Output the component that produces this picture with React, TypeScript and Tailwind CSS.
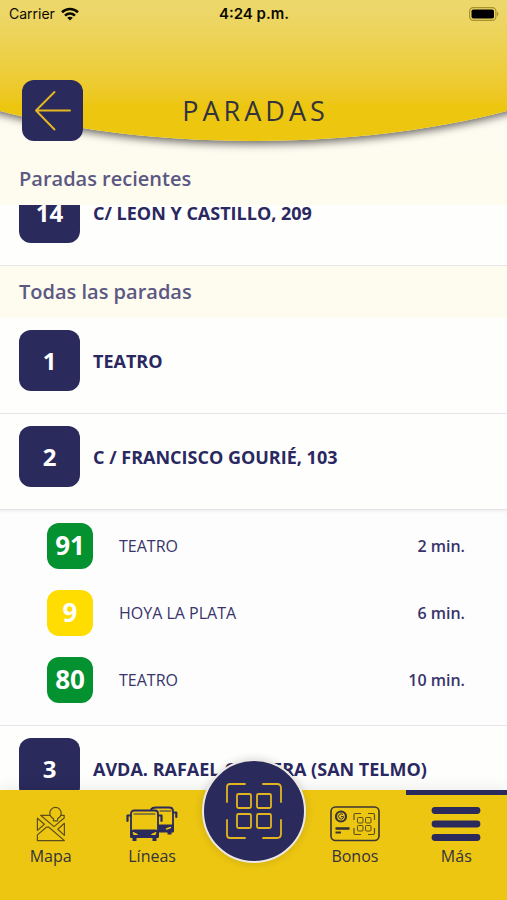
import { useState } from "react"
import type { ReactNode } from "react"

type Arrival = {
    line: string
    destination: string
    minutes: number
    color: string
}

type Stop = {
    id: number
    name: string
    arrivals?: Arrival[]
}

const recentStops: Stop[] = [
    { id: 14, name: "C/ LEON Y CASTILLO, 209" },
]

const allStops: Stop[] = [
    { id: 1, name: "TEATRO" },
    {
        id: 2,
        name: "C / FRANCISCO GOURIÉ, 103",
        arrivals: [
            { line: "91", destination: "TEATRO", minutes: 2, color: "bg-[#04912f]" },
            { line: "9", destination: "HOYA LA PLATA", minutes: 6, color: "bg-[#ffdd00]" },
            { line: "80", destination: "TEATRO", minutes: 10, color: "bg-[#04912f]" },
        ],
    },
    { id: 3, name: "AVDA. RAFAEL CABRERA (SAN TELMO)" },
]

const WifiIcon = () => (
    <svg viewBox="0 0 18 14" className="h-3.5 w-[18px]" fill="none" stroke="#0c0a00" strokeWidth="2.6" aria-hidden="true">
        <path d="M1 5.2C5.6.9 12.4.9 17 5.2" />
        <path d="M4 8.6C6.9 5.9 11.1 5.9 14 8.6" />
        <path d="M9 13.5 6.2 10.7C7.8 9.3 10.2 9.3 11.8 10.7Z" fill="#0c0a00" stroke="none" />
    </svg>
)

const BatteryIcon = () => (
    <svg viewBox="0 0 30 14" className="h-3.5 w-[30px]" aria-hidden="true">
        <rect x=".6" y=".6" width="26.3" height="12.8" rx="3.6" fill="none" stroke="#a8922c" strokeWidth="1.2" />
        <rect x="2.5" y="2.5" width="22.5" height="9" rx="1.8" fill="#000" />
        <path d="M28 4.8c1.7.6 1.7 3.8 0 4.4Z" fill="#a8922c" />
    </svg>
)

const BackIcon = () => (
    <svg viewBox="0 0 61 61" className="size-full" fill="none" stroke="#e6b820" strokeWidth="1.9" strokeLinecap="round" strokeLinejoin="round" aria-hidden="true">
        <path d="M32.5 12 14 30.5 32.5 49.5M14 30.5H48" />
    </svg>
)

const MapIcon = () => (
    <svg viewBox="0 0 30 36" className="h-9 w-[30px]" fill="none" stroke="#5d4f1c" strokeWidth="1.2" strokeLinejoin="round" aria-hidden="true">
        <path d="M17.4 14.8V12.6C15.200 11.600 13.800 9.600 13.800 7.100a5.700 5.700 0 0 1 11.400 0C25.200 9.600 23.800 11.600 21.600 12.600V14.800Z" />
        <path d="M14 9.3H4.6L18 20.6 28.2 12V9.3H25" />
        <path d="M1.4 12.2V24.4L8.4 18.3Z" />
        <path d="M28.4 17.3V29.4L21.8 23.3Z" />
        <path d="M1.4 28.9V34.6H28.4L12.9 21.2H10.4Z" />
    </svg>
)

const BusIcon = () => (
    <svg viewBox="0 0 52 36" className="h-9 w-[52px]" fill="none" stroke="#2a2a5c" strokeWidth="1.8" strokeLinejoin="round" strokeLinecap="round" aria-hidden="true">
        <path d="M25 3.5C26 1.7 28 1.5 30 1.5H43C45.8 1.5 47 2.8 47 5V24.5H32" />
        <path d="M47.5 6.5H50.3V11" strokeWidth="2.2" />
        <path d="M34 5H45" strokeWidth="1" />
        <path d="M33 19.5H47V25.5H33Z" fill="#2a2a5c" />
        <path d="M43.5 26V28.5" strokeWidth="4" strokeLinecap="butt" />
        <path d="M40.5 23 44.5 21.5" stroke="#edc612" strokeWidth="1.4" />
        <rect x="5" y="4.5" width="27" height="26.5" rx="3" fill="#edc612" />
        <path d="M8 8H29" strokeWidth="1" />
        <path d="M4.500 9.500H1.500V15M32.500 9.500H35.500V15" strokeWidth="2.200" />
        <path d="M5 25.200 8 24.500H29L32 25.200V31H5Z" fill="#2a2a5c" />
        <path d="M8.500 31V35M28.500 31V35" strokeWidth="4" strokeLinecap="butt" />
        <path d="M7.500 26.500 11.500 28.500H8ZM29.500 26.500 25.500 28.500H29Z" fill="#edc612" stroke="#edc612" strokeWidth="1" />
    </svg>
)

const ScanIcon = () => (
    <svg viewBox="0 0 56 56" className="size-14" fill="none" stroke="#e0b520" strokeWidth="1.8" strokeLinecap="round" aria-hidden="true">
        <path d="M1 19V4Q1 1 4 1H19M37 1H51Q55 1 55 5V19M55 37V51Q55 55 51 55H37M19 55H4Q1 55 1 52V37" />
        <rect x="11" y="11" width="14" height="14" rx="1.5" />
        <rect x="31" y="11" width="14" height="14" rx="1.5" />
        <rect x="11" y="31" width="14" height="14" rx="1.5" />
        <rect x="31" y="31" width="14" height="14" rx="1.5" />
    </svg>
)

const CardIcon = () => (
    <svg viewBox="0 0 50 36" className="h-9 w-[50px]" fill="none" stroke="#3a3535" aria-hidden="true">
        <rect x="1" y="1" width="48" height="33.5" rx="4.5" strokeWidth="1.6" />
        <circle cx="11" cy="10.5" r="5" strokeWidth="2.2" />
        <path d="M13 8.5a2.6 2.6 0 1 0 .3 3.5V10.5H11" strokeWidth="1" />
        <path d="M5.5 22.5H19.5" strokeWidth="2.6" />
        <path d="M5.5 26.5H11" strokeWidth="2" />
        <g stroke="#5d4f1c">
            <path d="M24 14V9Q24 7.5 25.5 7.5H31M38 7.5H43Q44.500 7.500 44.500 9V14M44.500 22V27Q44.500 28.500 43 28.500H38M31 28.500H25.500Q24 28.500 24 27V22" strokeWidth="1.2" />
            <rect x="27.5" y="11.5" width="5.5" height="5.5" rx="1" />
            <rect x="35.5" y="11.5" width="5.5" height="5.5" rx="1" />
            <rect x="27.5" y="19.5" width="5.5" height="5.5" rx="1" />
            <rect x="35.5" y="19.5" width="5.5" height="5.5" rx="1" />
        </g>
    </svg>
)

const MenuIcon = () => (
    <svg viewBox="0 0 50 36" className="h-9 w-[50px]" stroke="#2a2a5c" strokeWidth="6.8" strokeLinecap="round" aria-hidden="true">
        <path d="M4 4.5H46M4 18H46M4 31.5H46" />
    </svg>
)

const StatusBar = () => (
    <div className="grid h-7 grid-cols-3 items-center pl-[9px] pr-2 font-[Inter,sans-serif] text-sm text-[#0c0a00]">
        <div className="flex items-center gap-1.5">
            <span>Carrier</span>
            <WifiIcon />
        </div>
        <span className="text-center text-[15px] font-semibold">4:24 p.m.</span>
        <div className="flex justify-end">
            <BatteryIcon />
        </div>
    </div>
)

const Header = () => (
    <header className="relative h-[153px] shrink-0 overflow-x-clip bg-[#fefbf0]">
        <div className="absolute top-0 -left-[31%] h-[141px] w-[162%] rounded-[0_0_50%_50%/0_0_100%_100%] bg-linear-to-b from-[#ecd76b] from-5% via-[#edcf41] via-45% to-[#edc610] to-75% shadow-[0_2px_9px_1px_rgba(0,0,0,0.6)]" />
        <div className="relative">
            <StatusBar />
            <div className="grid grid-cols-[1fr_auto_1fr] items-center px-[22px] pt-[52px]">
                <button type="button" aria-label="Volver" className="size-[61px] rounded-xl bg-[#2a2a5c]">
                    <BackIcon />
                </button>
                <h1 className="pl-1 text-[27px] leading-8 tracking-[4px] text-[#33333d]">PARADAS</h1>
            </div>
        </div>
    </header>
)

const SectionTitle = ({ children }: { children: ReactNode }) => (
    <h2 className="flex h-13 shrink-0 items-center bg-[#fefbef] px-[19px] text-xl font-semibold text-[#5b5883]">{children}</h2>
)

const ArrivalRow = ({ arrival }: { arrival: Arrival }) => (
    <li className="flex h-[67px] items-center pr-[42px] pl-[47px] text-base text-[#37346b]">
        <span className={`flex size-[46px] items-center justify-center rounded-xl text-[26px] font-bold text-white ${arrival.color}`}>
            {arrival.line}
        </span>
        <span className="ml-[26px] flex-1">{arrival.destination}</span>
        <span className="font-semibold">{arrival.minutes} min.</span>
    </li>
)

const StopRow = ({ stop }: { stop: Stop }) => (
    <li className="shrink-0">
        <button type="button" className="flex h-24 w-full items-start border-b border-[#e6e4e6] bg-[#fefefd] px-[19px] pt-3 text-left">
            <span className="flex size-[61px] items-center justify-center rounded-xl bg-[#2a2a5c] text-2xl font-bold text-white">
                {stop.id}
            </span>
            <span className="ml-[13px] flex h-[61px] items-center text-lg font-bold text-[#2a2860]">{stop.name}</span>
        </button>
        {stop.arrivals && (
            <ul className="border-b border-[#e6e4e6] bg-[#fefdfd] pt-0.5 pb-3 shadow-[inset_0_5px_3px_-3px_rgba(0,0,0,0.05)]">
                {stop.arrivals.map(arrival => <ArrivalRow key={arrival.line} arrival={arrival} />)}
            </ul>
        )}
    </li>
)

const tabs = [
    { name: "Mapa", icon: <MapIcon /> },
    { name: "Líneas", icon: <BusIcon /> },
    null,
    { name: "Bonos", icon: <CardIcon /> },
    { name: "Más", icon: <MenuIcon /> },
]

const TabBar = () => {
    const [active, setActive] = useState("Más")

    return <nav className="relative grid h-[110px] shrink-0 grid-cols-5 bg-[#edc612] shadow-[0_-2px_14px_rgba(0,0,0,0.08)]">
        {tabs.map(tab => tab ? (
            <button
                key={tab.name}
                type="button"
                onClick={() => setActive(tab.name)}
                className={`flex flex-col items-center border-t-[5px] pt-[11px] text-base leading-7 text-[#33333d] ${active === tab.name ? "border-[#2a2a5c]" : "border-transparent"}`}
            >
                {tab.icon}
                <span>{tab.name}</span>
            </button>
        ) : <span key="scan" />)}
        <button
            type="button"
            aria-label="Escanear"
            className="absolute -top-[31px] left-1/2 flex size-26 -translate-x-1/2 items-center justify-center rounded-full border-2 border-[#ece9e4] bg-[#2a2a5c] shadow-[0_0_8px_rgba(0,0,0,0.15)]"
        >
            <ScanIcon />
        </button>
    </nav>
}

const App = () => (
    <div className="flex h-screen flex-col overflow-hidden bg-white font-['Open_Sans',sans-serif]">
        <Header />
        <main className="flex min-h-0 flex-1 flex-col">
            <SectionTitle>Paradas recientes</SectionTitle>
            <ul className="flex h-[61px] shrink-0 flex-col justify-end overflow-hidden">
                {recentStops.map(stop => <StopRow key={stop.id} stop={stop} />)}
            </ul>
            <SectionTitle>Todas las paradas</SectionTitle>
            <ul className="min-h-0 flex-1 overflow-hidden">
                {allStops.map(stop => <StopRow key={stop.id} stop={stop} />)}
            </ul>
        </main>
        <TabBar />
    </div>
)

export default App
